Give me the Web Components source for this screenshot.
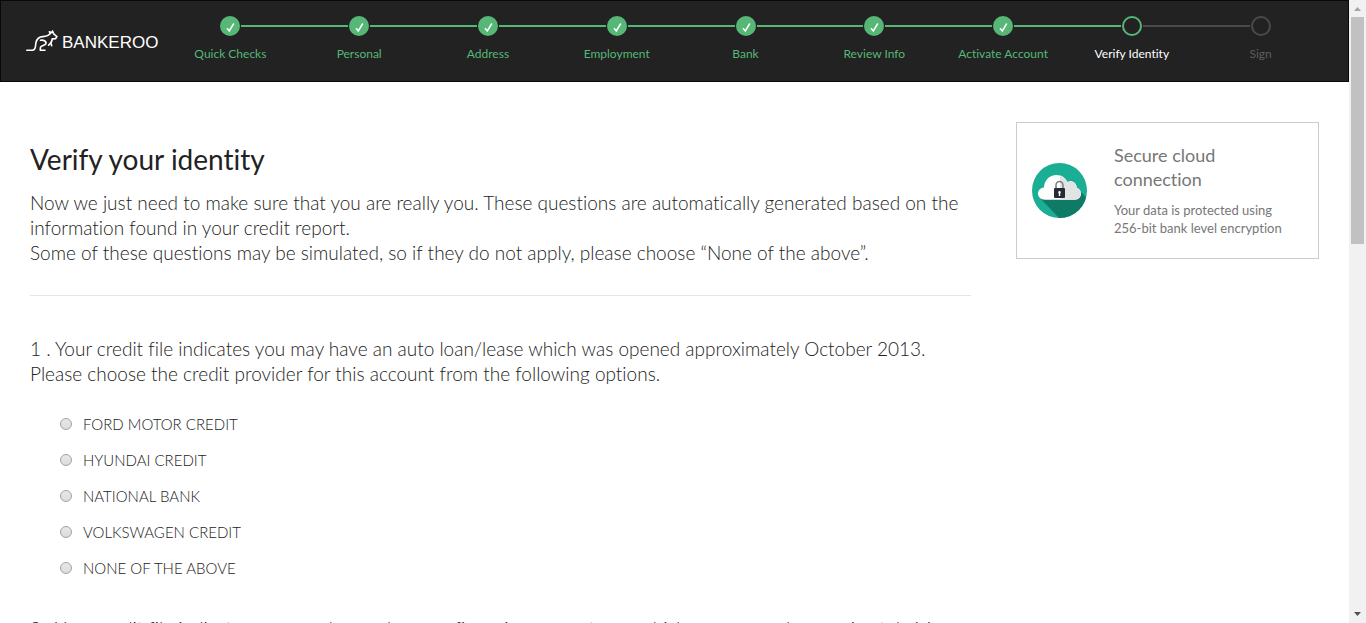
<!DOCTYPE html>
<html lang="en">
<head>
<meta charset="utf-8">
<meta name="viewport" content="width=device-width, initial-scale=1">
<title>Bankeroo – Verify your identity</title>
<style>
  html, body { height: 100%; margin: 0; }
  body { background: #fff; color: #222; font: 300 19px/25px Lato, "Liberation Sans", sans-serif; font-variant-ligatures: no-common-ligatures; overflow: hidden; }
</style>
</head>
<body>
<app-frame>
  <site-header slot="header">
    <progress-step state="done">Quick Checks</progress-step>
    <progress-step state="done">Personal</progress-step>
    <progress-step state="done">Address</progress-step>
    <progress-step state="done">Employment</progress-step>
    <progress-step state="done">Bank</progress-step>
    <progress-step state="done">Review Info</progress-step>
    <progress-step state="done">Activate Account</progress-step>
    <progress-step state="current">Verify Identity</progress-step>
    <progress-step state="todo">Sign</progress-step>
  </site-header>
  <page-intro heading="Verify your identity">
    Now we just need to make sure that you are really you. These questions are automatically generated based on the information found in your credit report.<br>
    Some of these questions may be simulated, so if they do not apply, please choose “None of the above”.
  </page-intro>
  <quiz-question name="q1" options="FORD MOTOR CREDIT|HYUNDAI CREDIT|NATIONAL BANK|VOLKSWAGEN CREDIT|NONE OF THE ABOVE">1 . Your credit file indicates you may have an auto loan/lease which was opened approximately October 2013. Please choose the credit provider for this account from the following options.</quiz-question>
  <quiz-question name="q2" options="">2 . Your credit file indicates you may have a home refinancing or mortgage which was opened approximately May</quiz-question>
  <secure-card slot="aside" heading="Secure cloud connection">Your data is protected using 256-bit bank level encryption</secure-card>
</app-frame>

<script>
const define = (name, markup, setup) => {
  const template = document.createElement('template');
  template.innerHTML = markup;
  customElements.define(name, class extends HTMLElement {
    constructor() {
      super();
      this.attachShadow({ mode: 'open' }).append(template.content.cloneNode(true));
    }
    connectedCallback() { if (setup) setup(this, this.shadowRoot); }
  });
};

define('app-frame', `
  <style>
    :host { display: grid; grid-template-columns: minmax(0, 1fr) 17px; height: 100vh; overflow: hidden; }
    .page { overflow: hidden; }
    .body { display: grid; grid-template-columns: minmax(0, 1fr) 303px; gap: 45px; align-items: start; padding: 40px 30px; }
    main { display: block; padding-top: 20px; }
  </style>
  <div class="page">
    <slot name="header"></slot>
    <div class="body">
      <main><slot></slot></main>
      <aside><slot name="aside"></slot></aside>
    </div>
  </div>
  <scroll-rail></scroll-rail>`);

define('scroll-rail', `
  <style>
    :host { display: flex; flex-direction: column; align-items: center; background: #f1f1f1; }
    svg { flex: none; display: block; }
    .track { flex: 1; display: flex; flex-direction: column; width: 13px; }
    .thumb { flex: 227; background: #c1c1c1; }
    .rest { flex: 362; }
  </style>
  <svg width="17" height="17" viewBox="0 0 17 17"><path d="M5 11h7L8.5 7z" fill="#a3a3a3"/></svg>
  <div class="track"><div class="thumb"></div><div class="rest"></div></div>
  <svg width="17" height="17" viewBox="0 0 17 17"><path d="M5 6h7L8.5 10z" fill="#505050"/></svg>`);

define('site-header', `
  <style>
    :host { display: block; }
    header { display: flex; box-sizing: border-box; height: 82px; padding-right: 23px; background: #222; border: 1px solid #080808; }
    .brand { flex: none; display: flex; align-items: center; gap: 4px; width: 140px; padding-left: 25px; color: #fff; font: 400 17px/20px "Liberation Sans", Arial, sans-serif; text-decoration: none; }
    .brand span { padding-top: 4px; }
    svg { flex: none; display: block; }
    nav { flex: 1; display: flex; padding-top: 15px; }
  </style>
  <header>
    <a class="brand" href="#">
      <svg width="32" height="22" viewBox="0 0 32 22" fill="none" stroke="#fff" stroke-width="1.6" stroke-linecap="round" stroke-linejoin="round" aria-hidden="true">
        <path d="M.8 20.200H6.500c3.500 0 2.800-4 3.400-7.400C10.800 8.600 13.500 6.600 17 6.600c3.200 0 4.800-.4 7.200-2.800L23.400 1.700l2.300 1L26.500 1l1.200 2.900 3.200 2.700-1.400 2.100-3.300.2c.1 3.100-1.800 4.900-3.600 6.300"/>
        <path d="M14.500 10.300c3.300-.6 6.300 1.200 5.300 3.600-.8 1.700-4.600 1.600-5.300 3.300l-.3 3H19M24.700 12.500l1 3.300"/>
      </svg>
      <span>BANKEROO</span>
    </a>
    <nav aria-label="Application progress"><slot></slot></nav>
  </header>`);

define('progress-step', `
  <style>
    :host { flex: 1 1 0; min-width: 0; display: block; --c: #56b777; --before: #56b777; --after: #56b777; color: #56b777; font-size: 12px; line-height: 16px; font-weight: 400; text-align: center; }
    .mark { display: flex; align-items: center; gap: 1px; }
    .mark::before, .mark::after { content: ""; flex: 1; height: 2px; background: var(--before); }
    .mark::after { background: var(--after); }
    :host(:first-child) { --before: transparent; }
    :host([state="current"]) { --after: #4a4a4a; color: #fff; }
    :host([state="todo"]) { --c: #4a4a4a; --before: #4a4a4a; color: #5e5e5e; }
    :host(:last-child) { --after: transparent; }
    .dot { flex: none; box-sizing: border-box; width: 20px; height: 20px; border: 2px solid var(--c); border-radius: 50%; }
    :host([state="done"]) .dot { background: var(--c); }
    svg { display: none; width: 16px; height: 16px; }
    :host([state="done"]) svg { display: block; }
    .label { padding-top: 10px; }
  </style>
  <div class="mark"><div class="dot"><svg viewBox="0 0 16 16" fill="none" stroke="#fff" stroke-width="1.5" aria-hidden="true"><path d="M5 10.200L7.300 13l4.500-7.500"/></svg></div></div>
  <div class="label"><slot></slot></div>`);

define('page-intro', `
  <style>
    :host { display: block; padding-bottom: 30px; border-bottom: 1px solid #e5e5e5; }
    h1 { margin: 0 0 14px; font-size: 28px; line-height: 34px; font-weight: 400; }
    p { margin: 0; }
  </style>
  <h1></h1><p><slot></slot></p>`,
  (host, root) => { root.querySelector('h1').textContent = host.getAttribute('heading'); });

define('quiz-question', `
  <style>
    :host { display: block; margin-top: 40px; }
    :host(:not([name="q1"])) { margin-top: 30px; }
    fieldset { min-width: 0; margin: 0; padding: 0; border: 0; }
    legend { padding: 0; }
    .options { display: flex; flex-direction: column; padding: 20px 0 0 30px; }
    label { display: flex; align-items: center; gap: 11px; font-size: 15px; line-height: 36px; }
    label span { padding-top: 1px; line-height: 35px; }
    input { appearance: none; flex: none; box-sizing: border-box; width: 12px; height: 12px; margin: 0; border: 1px solid #a2a2a2; border-radius: 50%; background: linear-gradient(#e8e8e8, #dcdcdc); }
    input:checked { background: radial-gradient(#444 0 3px, #e2e2e2 4px); }
  </style>
  <fieldset><legend><slot></slot></legend><div class="options"></div></fieldset>`,
  (host, root) => {
    const name = host.getAttribute('name');
    const box = root.querySelector('.options');
    box.replaceChildren();
    host.getAttribute('options').split('|').filter(Boolean).forEach((text, i) => {
      const label = document.createElement('label');
      const input = document.createElement('input');
      const caption = document.createElement('span');
      input.type = 'radio';
      input.name = name;
      input.id = name + '-' + i;
      label.htmlFor = input.id;
      caption.textContent = text;
      label.append(input, caption);
      box.append(label);
    });
  });

define('secure-card', `
  <style>
    :host { display: flex; align-items: center; gap: 27px; padding: 20px 15px 21px; border: 1px solid #ccc; color: #777; font-weight: 400; }
    svg { flex: none; display: block; }
    .text { flex: 1; padding-right: 15px; }
    h2 { margin: 0 0 10px; max-width: 140px; font-size: 18px; line-height: 24px; font-weight: 400; }
    p { margin: 0; font-size: 13px; line-height: 18px; }
  </style>
  <svg width="55" height="55" viewBox="0 0 55 55" aria-hidden="true">
    <defs><clipPath id="disc"><circle cx="27.500" cy="27.500" r="27.500"/></clipPath></defs>
    <g clip-path="url(#disc)">
      <path fill="#1aae95" d="M0 0h55v55H0z"/>
      <path fill="#0f7a66" d="M8 35L28 56h28V36l-8-8z"/>
    </g>
    <path fill="#fff" d="M13 36.700C9 36.700 6 34 6 30.500c0-3.300 2.500-5.800 6-6.100C12.200 17.500 17.500 12 24.500 12c5 0 9 2.800 10.800 7 4.800-2 9.300 1 9.500 5.900 2.600.7 4.200 2.900 4.200 5.600 0 3.500-2.600 6.200-6.200 6.200z"/>
    <path fill="#e2e4e3" d="M28 12.500c3.400.9 6 3.300 7.300 6.500 4.800-2 9.300 1 9.500 5.900 2.600.7 4.200 2.900 4.200 5.600 0 3.500-2.600 6.200-6.200 6.200H28z"/>
    <path fill="none" stroke="#777d80" stroke-width="1.5" d="M24 26v-4a3.500 3.500 0 0 1 7 0v4"/>
    <rect x="22" y="25" width="11" height="10" rx="1" fill="#252a35"/>
    <path fill="#fff" d="M27.500 28a1.300 1.300 0 0 1 .7 2.400V33h-1.400v-2.600a1.300 1.300 0 0 1 .7-2.400z"/>
  </svg>
  <div class="text"><h2></h2><p><slot></slot></p></div>`,
  (host, root) => { root.querySelector('h2').textContent = host.getAttribute('heading'); });
</script>
</body>
</html>
